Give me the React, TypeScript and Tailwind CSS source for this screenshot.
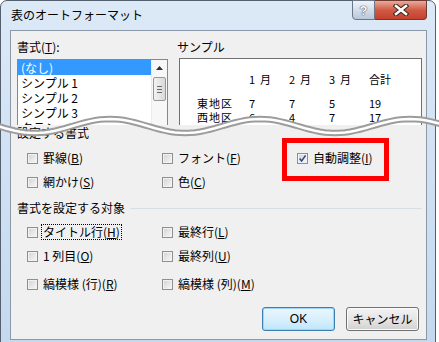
import React from "react";

const wavePts = Array.from({ length: 95 }, (_, i) => {
  const x = i * 5 - 10;
  const y = 126 - 7 * Math.cos((2 * Math.PI * (x - 110)) / 150);
  return `${x},${y.toFixed(1)}`;
}).join(" ");

function Check({ checked }: { checked?: boolean }) {
  return (
    <span className="relative w-[11px] h-[11px] shrink-0 border border-[#8f8f8f] bg-linear-to-br from-[#d2d2d2] to-[#f9f9f9] shadow-[inset_0_0_0_1px_#f2f2f2]">
      {checked && (
        <svg viewBox="0 0 9 9" className="absolute inset-0 w-full h-full">
          <path d="M1.6 4.6 L3.6 7 L7.6 1.4" stroke="#2d4684" strokeWidth="1.5" fill="none" />
        </svg>
      )}
    </span>
  );
}

function Opt({ label, k, checked, focus }: { label: string; k: string; checked?: boolean; focus?: boolean }) {
  return (
    <div className="flex items-center h-[16px]">
      <Check checked={checked} />
      <span
        className={
          "ml-[3px] px-[1px] border leading-[14px] whitespace-pre " +
          (focus ? "border-dotted border-black" : "border-transparent")
        }
      >
        {label}(<u>{k}</u>)
      </span>
    </div>
  );
}

const listItems = ["(なし)", "シンプル 1", "シンプル 2", "シンプル 3", "クラシック 1", "クラシック 2"];

const sample = [
  ["", "1  月", "2  月", "3  月", "合計"],
  ["東地区", "7", "7", "5", "19"],
  ["西地区", "6", "4", "7", "17"],
  ["南地区", "8", "7", "6", "21"],
];

export default function App() {
  return (
    <div className="relative w-[439px] h-[342px] overflow-hidden bg-white text-[12px] text-black font-['Noto_Sans_CJK_JP',sans-serif]">
      <div className="w-[436px] h-[352px] rounded-t-[7px] border border-[#55606e] bg-linear-to-b from-[#dce9f7] to-[#c4d8ee] pl-[9px] pr-[8px] flex flex-col">
        {/* title bar */}
        <div className="h-[29px] flex justify-between items-start">
          <div className="ml-[1px] mt-[6px] leading-[16px] text-[12px]">表のオートフォーマット</div>
          <div className="flex -mt-[1px]">
            <div className="w-[23px] h-[20px] rounded-bl-[4px] border border-[#6b7787] bg-linear-to-b from-[#eef3f9] to-[#b9c8da] flex items-center justify-center text-white font-bold text-[13px] leading-none font-['Liberation_Sans',sans-serif] [text-shadow:0_0_1px_#2b3340,0_0_1px_#2b3340]">
              ?
            </div>
            <div className="w-[52px] h-[20px] rounded-br-[4px] border border-l-0 border-[#6e3a32] bg-linear-to-b from-[#e9a99b] via-[#cf5a45] to-[#c6402b] flex items-center justify-center">
              <svg width="16" height="12" viewBox="0 0 16 12">
                <path d="M3 2 L13 10 M13 2 L3 10" stroke="#3a2420" strokeWidth="4.6" strokeLinecap="square" />
                <path d="M3 2 L13 10 M13 2 L3 10" stroke="#ffffff" strokeWidth="2.6" strokeLinecap="square" />
              </svg>
            </div>
          </div>
        </div>

        {/* client */}
        <div className="relative h-[310px] border border-[#8b98a8] bg-[#f0f0f0] flex flex-col">
          {/* upper part */}
          <div className="h-[94px] overflow-hidden flex pl-[6px]">
            <div className="w-[151px] flex flex-col">
              <div className="mt-[8px] leading-[16px]">
                書式(<u>T</u>):
              </div>
              <div className="mt-[4px] h-[100px] border border-[#828790] bg-white flex">
                <div className="flex-1 flex flex-col">
                  {listItems.map((t, i) => (
                    <div
                      key={t}
                      className={
                        "h-[15px] leading-[15px] pl-[3px] whitespace-pre " + (i === 0 ? "bg-[#3399ff] text-white" : "")
                      }
                    >
                      {t}
                    </div>
                  ))}
                </div>
                <div className="w-[16px] flex flex-col items-center bg-[#f7f7f7] border-l border-[#ececec]">
                  <svg width="7" height="4" viewBox="0 0 7 4" className="mt-[6px]">
                    <path d="M0 4 L3.5 0 L7 4 Z" fill="#303030" />
                  </svg>
                  <div className="mt-[7px] w-[13px] h-[24px] rounded-[2px] border border-[#979797] bg-linear-to-r from-[#f3f3f3] to-[#d9d9d9] flex flex-col items-center justify-center gap-[2px]">
                    <span className="w-[5px] h-px bg-[#6b6b6b]" />
                    <span className="w-[5px] h-px bg-[#6b6b6b]" />
                    <span className="w-[5px] h-px bg-[#6b6b6b]" />
                  </div>
                </div>
              </div>
            </div>
            <div className="ml-[9px] flex flex-col">
              <div className="mt-[8px] leading-[16px]">サンプル</div>
              <div className="ml-[2px] mt-[3px] w-[243px] h-[100px] border border-[#707070] bg-white pt-[13px] pl-[17px] text-[11px]">
                {sample.map((row, r) => (
                  <div
                    key={r}
                    className={"grid grid-cols-[52px_40px_40px_40px_1fr] h-[14px] leading-[14px] " + (r === 1 ? "mt-[10px]" : "")}
                  >
                    {row.map((c, j) => (
                      <span key={j} className={"whitespace-pre " + (j === 0 ? "tracking-[1px]" : "")}>
                        {c}
                      </span>
                    ))}
                  </div>
                ))}
              </div>
            </div>
          </div>

          {/* lower part */}
          <div className="flex flex-col">
            <div className="pl-[6px] h-[16px] leading-[16px]">設定する書式</div>
            <div className="mt-[9px] pl-[16px] grid grid-cols-[135px_135px_1fr] gap-y-[8px]">
              <Opt label="罫線" k="B" />
              <Opt label="フォント" k="F" />
              <Opt label="自動調整" k="I" checked />
              <Opt label="網かけ" k="S" />
              <Opt label="色" k="C" />
            </div>
            <div className="mt-[10px] pl-[6px] h-[16px] flex items-center">
              <span className="leading-[16px]">書式を設定する対象</span>
              <span className="ml-[5px] mr-[4px] flex-1 h-px bg-[#d5dfe5]" />
            </div>
            <div className="mt-[8px] pl-[16px] grid grid-cols-[135px_1fr] gap-y-[8px]">
              <Opt label="タイトル行" k="H" focus />
              <Opt label="最終行" k="L" />
              <Opt label="1 列目" k="O" />
              <Opt label="最終列" k="U" />
            </div>
            <div className="mt-[12px] pl-[16px] grid grid-cols-[135px_1fr]">
              <Opt label="縞模様 (行)" k="R" />
              <Opt label="縞模様 (列)" k="M" />
            </div>
            <div className="mt-[15px] pr-[7px] flex justify-end gap-[11px]">
              <div className="w-[73px] h-[24px] rounded-[3px] border border-[#3c7fb1] bg-linear-to-b from-[#eaf6fd] via-[#d9f0fc] to-[#bee6fd] shadow-[inset_0_0_0_1px_#9fd4f5] flex items-center justify-center font-['Liberation_Sans',sans-serif]">
                OK
              </div>
              <div className="w-[73px] h-[24px] rounded-[3px] border border-[#707070] bg-linear-to-b from-[#f2f2f2] via-[#e6e6e6] to-[#d1d1d1] shadow-[inset_0_0_0_1px_#fbfbfb] flex items-center justify-center">
                キャンセル
              </div>
            </div>
          </div>

          {/* highlight */}
          <div className="absolute left-[271px] top-[107px] w-[107px] h-[43px] border-[5px] border-[#ff0000]" />
        </div>
      </div>

      {/* torn edge */}
      <svg className="absolute inset-0 pointer-events-none" width="439" height="342">
        <polyline points={wavePts} fill="none" stroke="#9c9c9c" strokeWidth="6.5" />
        <polyline points={wavePts} fill="none" stroke="#ffffff" strokeWidth="2.5" />
      </svg>
    </div>
  );
}
